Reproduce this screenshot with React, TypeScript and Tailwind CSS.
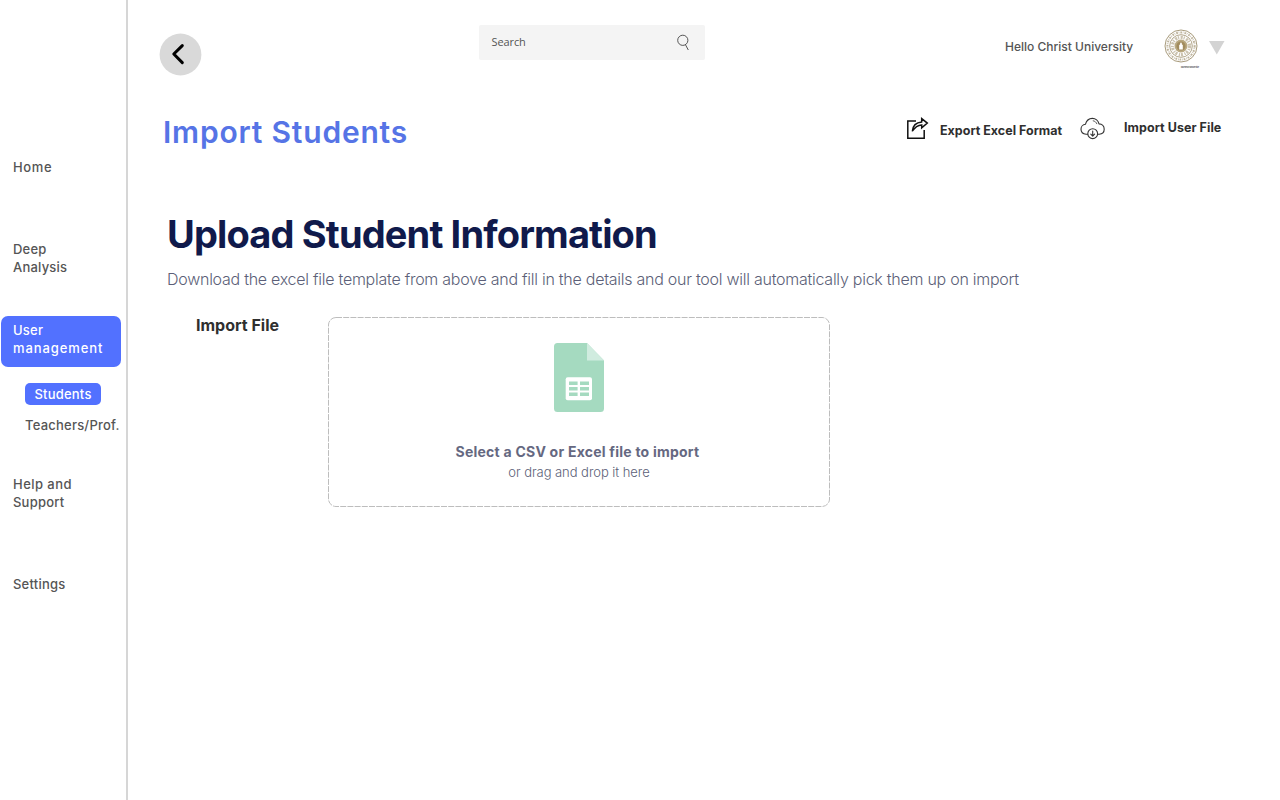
import type { ReactNode } from 'react';

function NavItem({ children, className }: { children: ReactNode; className: string }) {
  return <a className={`block pl-[13px] ${className}`}>{children}</a>;
}

function Sidebar() {
  return (
    <nav className="flex h-[800px] w-[128px] shrink-0 flex-col border-r-2 border-[#d6d6d6] pt-[158px] text-[13px] leading-[18px] font-medium tracking-[0.22px] text-[#555]">
      <NavItem className="tracking-[0.6px]">Home</NavItem>
      <NavItem className="mt-16">Deep<br />Analysis</NavItem>
      <div className="mt-[40px] ml-px h-[51px] w-[120px] rounded-[7px] bg-[#5271ff] pt-[5px] pl-3 text-white">
        User<br /><span className="tracking-[0.9px]">management</span>
      </div>
      <div className="mt-4 ml-[25px] h-[22px] w-[76px] rounded-[5px] bg-[#5271ff] text-center leading-[23px] text-white">
        Students
      </div>
      <div className="mt-[11px] ml-[25px] whitespace-nowrap">Teachers/Prof.</div>
      <NavItem className="mt-[41px]"><span className="tracking-[0.45px]">Help and</span><br />Support</NavItem>
      <NavItem className="mt-16">Settings</NavItem>
    </nav>
  );
}

function Crest() {
  return (
    <svg width="38" height="44" viewBox="0 0 38 44" fill="none" overflow="visible">
      <g stroke="#a89b7c">
        <circle cx="17" cy="18" r="16" strokeWidth="1" />
        <circle cx="17" cy="18" r="13.6" strokeWidth="2" strokeDasharray="1.7 0.8 0.6 1.1" opacity="0.75" />
        <circle cx="17" cy="18" r="11.3" strokeWidth="0.9" />
        <circle cx="17" cy="18" r="8.6" strokeWidth="3.2" strokeDasharray="2.1 0.9 1.2 1.5" opacity="0.6" />
      </g>
      <circle cx="17" cy="18" r="6.5" fill="#b9a982" />
      <circle cx="17" cy="18" r="4.6" fill="#a28c5e" />
      <path d="M17 14.2c1 1 1.2 1.8.8 2.6h1v4.6h-3.6v-4.6h1c-.4-.8-.2-1.6.8-2.6z" fill="#fff" />
      <text x="17" y="39.8" fontSize="2.6" fontWeight="700" fill="#333" fontFamily="Inter, sans-serif" textLength="18" lengthAdjust="spacingAndGlyphs">Excellence and Service</text>
    </svg>
  );
}

function ExportIcon() {
  return (
    <svg width="24" height="24" viewBox="0 0 24 24" fill="none" stroke="#111" strokeWidth="1.5">
      <path d="M10 4H1.8v17.2h16.4V13" />
      <path d="M6.3 14.2C6.8 8.7 10.4 5.3 15.7 4.9V1.6L21.3 6.1l-5.6 4.7V7.9c-4 .2-6.9 2.4-9.4 6.3z" />
    </svg>
  );
}

function CloudIcon() {
  return (
    <svg width="26" height="24" viewBox="0 0 26 24" fill="none" stroke="#333" strokeWidth="1.1" strokeLinecap="round" strokeLinejoin="round">
      <path d="M7.6 17.2H6.1C3.2 17 1 15 1 12.3c0-2.7 2-4.8 4.4-5C6.4 4 9 1.4 12.3 1.4c3.3 0 6 2.5 6.7 5.5 3.1.1 5.2 2.4 5.2 5.3 0 2.8-2.1 4.8-5 5h-1.4" />
      <path d="M13.2 3.8c1.7.3 3 1.3 3.6 2.9" strokeWidth="0.8" />
      <circle cx="12.7" cy="16.7" r="4.9" />
      <path d="M12.7 14.1v5M10.8 17.2l1.9 1.9 1.9-1.9" />
    </svg>
  );
}

function SheetIcon() {
  return (
    <svg width="50" height="70" viewBox="0 0 50 70">
      <path d="M3.5 0H33L50 17.5V65.5a3.5 3.5 0 0 1-3.5 3.5h-43A3.5 3.5 0 0 1 0 65.5V3.5A3.5 3.5 0 0 1 3.5 0z" fill="#a5dac0" />
      <path d="M33 0L50 17.5H33z" fill="#d0ecdf" />
      <rect x="11.7" y="34.3" width="26.3" height="23" rx="2" fill="#fff" />
      <path d="M15 38.5h8.6v3.5H15zM26 38.5h9v3.5h-9zM15 44h8.6v3.5H15zM26 44h9v3.5h-9zM15 49.5h8.6v3.5H15zM26 49.5h9v3.5h-9z" fill="#a5dac0" />
    </svg>
  );
}

function Header() {
  return (
    <header className="flex h-[76px] items-start">
      <button className="mt-[33px] ml-[31px] h-[43px] w-[43px]" aria-label="Back">
        <svg width="43" height="43" viewBox="0 0 43 43" fill="none">
          <circle cx="21.5" cy="21.5" r="20.9" fill="#d9d9d9" />
          <path d="M23.3 12.6L14.8 21l8.5 8.6" stroke="#000" strokeWidth="3" strokeLinecap="round" strokeLinejoin="round" />
        </svg>
      </button>
      <div className="mt-[25px] ml-[276.5px] flex h-[35px] w-[226.5px] items-center justify-between rounded-[2px] bg-[#f4f4f4] pr-[13px] pl-[13px]">
        <span className="pb-px font-['Open_Sans',sans-serif] text-[11px] tracking-[-0.1px] text-[#555]">Search</span>
        <svg width="16" height="18" viewBox="0 0 16 18" fill="none" stroke="#555" strokeWidth="1">
          <circle cx="6.8" cy="6.3" r="5.1" />
          <path d="M9.5 10.8l2.8 5.2" />
        </svg>
      </div>
      <span className="mt-[38px] ml-[300px] w-[159px] text-[12px] leading-[18px] font-medium whitespace-nowrap text-[#555]">
        Hello Christ University
      </span>
      <div className="mt-[28px]"><Crest /></div>
      <svg className="mt-[41px] ml-[7px]" width="16" height="14" viewBox="0 0 16 14"><path d="M0 0h15.5L7.8 13.5z" fill="#d3d3d3" /></svg>
    </header>
  );
}

function TitleBar() {
  return (
    <div className="mt-[38px] flex h-[38px] items-start pl-[35px]">
      <h1 className="w-[743px] text-[30px] leading-[37px] font-semibold tracking-[0.8px] text-[#5674e6]">Import Students</h1>
      <div className="mt-[3px]"><ExportIcon /></div>
      <span className="mt-[8px] ml-[10px] w-[140px] text-[12.5px] leading-[18px] font-bold whitespace-nowrap text-[#2f2f2f]">Export Excel Format</span>
      <div className="mt-[3px]"><CloudIcon /></div>
      <span className="mt-[5px] ml-[18px] text-[12.5px] leading-[18px] font-bold tracking-[0.05px] whitespace-nowrap text-[#2f2f2f]">Import User File</span>
    </div>
  );
}

function DropZone() {
  return (
    <div className="relative flex h-[190px] w-[502px] flex-col items-center pt-[26px]">
      <svg className="absolute inset-0" width="502" height="190" fill="none">
        <rect x="0.5" y="0.5" width="501" height="189" rx="7.5" stroke="#bdbdbd" strokeDasharray="6 1.2" />
      </svg>
      <SheetIcon />
      <p className="mt-[29px] pr-[3px] text-[14px] leading-[20px] font-bold tracking-[0.23px] whitespace-nowrap text-[#656881]">Select a CSV or Excel file to import</p>
      <p className="text-[13px] leading-[20px] font-light tracking-[-0.05px] whitespace-nowrap text-[#5c5f78]">or drag and drop it here</p>
    </div>
  );
}

export default function App() {
  return (
    <div className="flex h-[800px] w-[1280px] overflow-hidden bg-white font-['Inter',sans-serif]">
      <Sidebar />
      <main className="flex-1">
        <Header />
        <TitleBar />
        <section className="pt-[57px] pl-[39px]">
          <h2 className="text-[38px] leading-[50px] font-bold tracking-[-0.85px] whitespace-nowrap text-[#101a4b]">Upload Student Information</h2>
          <p className="mt-[10px] text-[16px] leading-[20px] font-light tracking-[-0.257px] whitespace-nowrap text-[#5c5f78]">
            Download the excel file template from above and fill in the details and our tool will automatically pick them up on import
          </p>
          <div className="mt-[28px] flex items-start">
            <h3 className="-mt-px w-[161px] pl-[29px] text-[16px] leading-[18px] font-bold whitespace-nowrap text-[#2f2f2f]">Import File</h3>
            <DropZone />
          </div>
        </section>
      </main>
    </div>
  );
}
